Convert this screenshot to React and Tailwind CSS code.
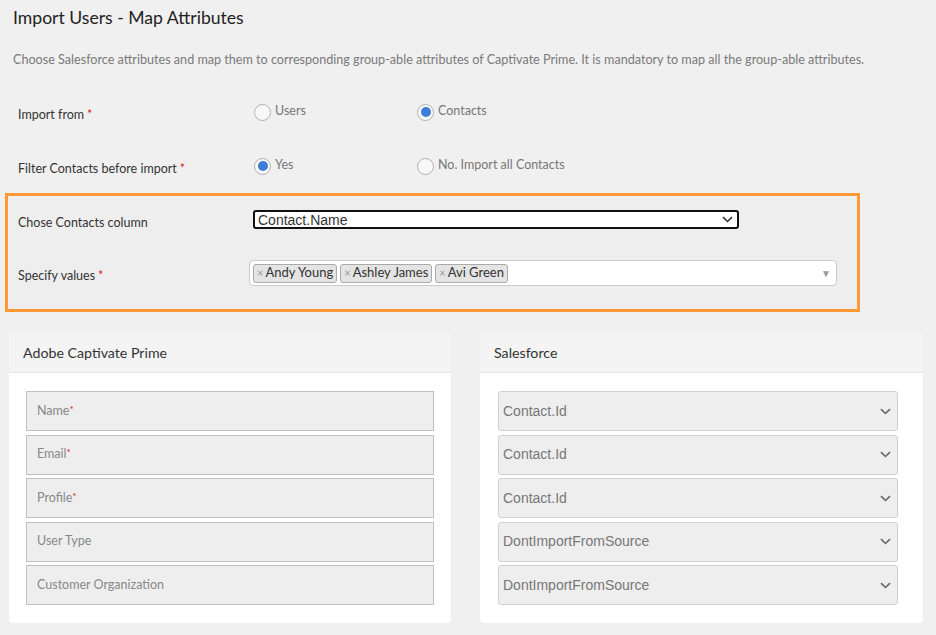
import React from 'react'

const sans = { fontFamily: 'Lato, "Noto Sans", sans-serif' }

function Star() {
  return <span className="text-[#e02020] ml-[3px]">*</span>
}

function Radio({ checked, label }) {
  return (
    <div className="flex items-center gap-[4px]">
      <span className="w-[17px] h-[17px] rounded-full border-[1.5px] border-[#b0b0b0] bg-[#f8f8f8] flex items-center justify-center">
        {checked && <span className="w-[10px] h-[10px] rounded-full bg-[#3b7dd8]" />}
      </span>
      <span className="text-[12.5px] text-[#777] -mt-[2px]">{label}</span>
    </div>
  )
}

function Chevron({ className }) {
  return (
    <svg width="11" height="7" viewBox="0 0 11 7" className={className}>
      <path d="M1 1.2 L5.5 5.5 L10 1.2" fill="none" stroke="currentColor" strokeWidth="1.6" />
    </svg>
  )
}

function Tag({ children }) {
  return (
    <span className="h-[19px] flex items-center px-[3px] bg-[#e4e4e4] border border-[#aaa] rounded-[3px] text-[13px] text-[#333]">
      <span className="text-[#999] text-[11px] mr-[2px]">×</span>
      {children}
    </span>
  )
}

function Panel({ title, children, className }) {
  return (
    <div className={`bg-white rounded-[4px] ${className}`}>
      <div className="h-[40px] bg-[#f4f4f4] border-b border-[#e4e4e4] rounded-t-[4px] flex items-center pl-[14px] text-[14.2px] text-[#333]">
        {title}
      </div>
      <div className="pt-[18px] pb-[18px] flex flex-col gap-[3.5px]">{children}</div>
    </div>
  )
}

export default function App() {
  const left = [
    ['Name', true],
    ['Email', true],
    ['Profile', true],
    ['User Type', false],
    ['Customer Organization', false],
  ]
  const right = ['Contact.Id', 'Contact.Id', 'Contact.Id', 'DontImportFromSource', 'DontImportFromSource']

  return (
    <div className="w-[936px] h-[635px] bg-[#f0f0f0] overflow-hidden" style={sans}>
      <div className="pt-[7px] pl-[13px] text-[17.6px] leading-[22px] text-[#222]">Import Users - Map Attributes</div>
      <div className="mt-[22px] pl-[13px] text-[12.6px] leading-[18px] text-[#7a7a7a]">
        Choose Salesforce attributes and map them to corresponding group-able attributes of Captivate Prime. It is mandatory to map all the group-able attributes.
      </div>

      <div className="mt-[28px] h-[30px] flex items-center">
        <div className="w-[254px] pl-[18px] text-[12.5px] text-[#333] mt-[6px]">
          Import from<Star />
        </div>
        <div className="w-[163px]"><Radio label="Users" /></div>
        <Radio checked label="Contacts" />
      </div>

      <div className="mt-[24px] h-[30px] flex items-center">
        <div className="w-[254px] pl-[18px] text-[12.5px] text-[#333] mt-[6px]">
          Filter Contacts before import<Star />
        </div>
        <div className="w-[163px]"><Radio checked label="Yes" /></div>
        <Radio label="No. Import all Contacts" />
      </div>

      <div className="mt-[12px] ml-[5px] w-[855px] h-[119px] border-[3px] border-[#ff9933] bg-[#eeeeee] flex flex-col">
        <div className="mt-[14px] h-[19px] flex items-center">
          <div className="w-[245px] pl-[10px] text-[12.5px] text-[#333] mt-[7px]">Chose Contacts column</div>
          <div className="w-[486px] h-[19px] bg-white border-2 border-[#111] rounded-[3px] flex items-center justify-between pl-[3px] pr-[4px]">
            <span className="text-[14px] text-[#333] leading-none" style={{ fontFamily: '"Liberation Sans", Arial, sans-serif' }}>Contact.Name</span>
            <Chevron className="text-[#333]" />
          </div>
        </div>
        <div className="mt-[31px] h-[26px] flex items-center">
          <div className="w-[241px] pl-[10px] text-[12.5px] text-[#333] mt-[6px]">
            Specify values<Star />
          </div>
          <div className="w-[588px] h-[26px] bg-white border border-[#ccc] rounded-[4px] flex items-center pl-[3px] pr-[5px] gap-[3px]">
            <Tag>Andy Young</Tag>
            <Tag>Ashley James</Tag>
            <Tag>Avi Green</Tag>
            <span className="ml-auto text-[10px] text-[#999]">▼</span>
          </div>
        </div>
      </div>

      <div className="mt-[21px] flex">
        <Panel title="Adobe Captivate Prime" className="ml-[9px] w-[442px]">
          {left.map(([label, req]) => (
            <div key={label} className="ml-[17px] w-[408px] h-[40px] bg-[#eeeeee] border border-[#c0c0c0] flex items-center pl-[10px] text-[12.5px] text-[#888]">
              {label}
              {req && <span className="text-[#e02020] text-[10px] -mt-[4px]">*</span>}
            </div>
          ))}
        </Panel>
        <Panel title="Salesforce" className="ml-[29px] w-[443px]">
          {right.map((v, i) => (
            <div key={i} className="ml-[18px] w-[400px] h-[40px] bg-[#eeeeee] border border-[#d0d0d0] rounded-[3px] flex items-center justify-between pl-[4px] pr-[6px]">
              <span className="text-[14px] text-[#777]" style={{ fontFamily: '"Liberation Sans", Arial, sans-serif' }}>{v}</span>
              <Chevron className="text-[#666]" />
            </div>
          ))}
        </Panel>
      </div>
    </div>
  )
}
